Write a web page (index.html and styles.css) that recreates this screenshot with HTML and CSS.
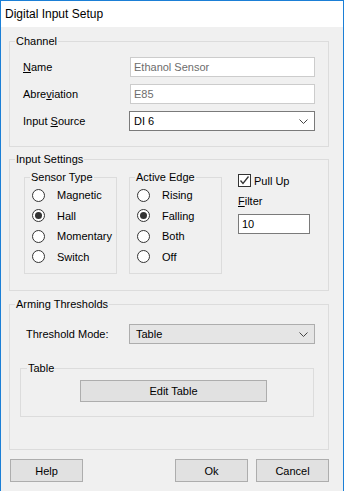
FILE: index.html
```html
<!DOCTYPE html>
<html lang="en">
<head>
    <meta charset="UTF-8">
    <meta name="viewport" content="width=device-width, initial-scale=1.0">
    <title>Digital Input Setup</title>
    <link rel="stylesheet" href="styles.css">
</head>
<body>
    <div class="window">
        <div class="titlebar">Digital Input Setup</div>
        <div class="client">

            <fieldset class="group channel">
                <legend>Channel</legend>
                <div class="form-grid">
                    <span class="label"><u>N</u>ame</span>
                    <div class="textbox disabled">Ethanol Sensor</div>
                    <span class="label">Abre<u>v</u>iation</span>
                    <div class="textbox disabled">E85</div>
                    <span class="label">Input <u>S</u>ource</span>
                    <div class="combo white">
                        <span>DI 6</span>
                        <svg class="arrow" width="9" height="5" viewBox="0 0 9 5"><path d="M0.5 0.5 L4.5 4.5 L8.5 0.5" fill="none" stroke="#444" stroke-width="1"/></svg>
                    </div>
                </div>
            </fieldset>

            <fieldset class="group settings">
                <legend>Input Settings</legend>
                <div class="settings-row">
                    <fieldset class="group subgroup">
                        <legend>Sensor Type</legend>
                        <div class="radio-list">
                            <div class="radio"><span class="dot"></span>Magnetic</div>
                            <div class="radio"><span class="dot checked"></span>Hall</div>
                            <div class="radio"><span class="dot"></span>Momentary</div>
                            <div class="radio"><span class="dot"></span>Switch</div>
                        </div>
                    </fieldset>
                    <fieldset class="group subgroup">
                        <legend>Active Edge</legend>
                        <div class="radio-list">
                            <div class="radio"><span class="dot"></span>Rising</div>
                            <div class="radio"><span class="dot checked"></span>Falling</div>
                            <div class="radio"><span class="dot"></span>Both</div>
                            <div class="radio"><span class="dot"></span>Off</div>
                        </div>
                    </fieldset>
                    <div class="side">
                        <div class="checkbox">
                            <span class="box">
                                <svg width="11" height="11" viewBox="0 0 11 11"><path d="M1.5 5.5 L4 8.5 L9.5 1.5" fill="none" stroke="#333" stroke-width="1.3"/></svg>
                            </span>
                            Pull Up
                        </div>
                        <div class="filter-label"><u>F</u>ilter</div>
                        <div class="textbox filter">10</div>
                    </div>
                </div>
            </fieldset>

            <fieldset class="group arming">
                <legend>Arming Thresholds</legend>
                <div class="arming-body">
                    <div class="mode-row">
                        <span class="label">Threshold Mode:</span>
                        <div class="combo grey">
                            <span>Table</span>
                            <svg class="arrow" width="9" height="5" viewBox="0 0 9 5"><path d="M0.5 0.5 L4.5 4.5 L8.5 0.5" fill="none" stroke="#444" stroke-width="1"/></svg>
                        </div>
                    </div>
                    <fieldset class="group table-group">
                        <legend>Table</legend>
                        <button class="btn edit-table">Edit Table</button>
                    </fieldset>
                </div>
            </fieldset>

            <div class="buttons">
                <button class="btn">Help</button>
                <div class="spacer"></div>
                <button class="btn">Ok</button>
                <button class="btn">Cancel</button>
            </div>
        </div>
    </div>
</body>
</html>
```

FILE: styles.css
```css
html, body {
    margin: 0;
    padding: 0;
}

body {
    width: 344px;
    height: 491px;
    overflow: hidden;
    font-family: "Liberation Sans", Arial, sans-serif;
    font-size: 11px;
    color: #000;
    background: #f0f0f0;
}

u {
    text-decoration: underline;
    text-underline-offset: 1px;
}

.window {
    box-sizing: border-box;
    height: 491px;
    border: 1px solid #1b7fd6;
    border-bottom: none;
    display: flex;
    flex-direction: column;
}

.titlebar {
    height: 26px;
    line-height: 26px;
    background: #fff;
    padding-left: 4px;
    font-size: 12px;
}

.client {
    flex: 1;
    background: #f0f0f0;
    padding: 7px 14px 0 8px;
}

/* group boxes: legend sits at the left edge, content padding is on the inner block */
.group {
    margin: 0;
    padding: 0;
    min-width: 0;
    border: 1px solid #dcdcdc;
}

.group > legend {
    margin-left: 5px;
    padding: 0 1px;
    line-height: 15px;
}

.form-grid {
    display: grid;
    grid-template-columns: 107px 185px;
    grid-auto-rows: 20px;
    row-gap: 7px;
    align-items: center;
    padding: 8px 13px 15px 13px;
}

.textbox {
    box-sizing: border-box;
    height: 20px;
    line-height: 18px;
    padding: 0 3px;
    background: #fff;
    border: 1px solid #7a7a7a;
}

.textbox.disabled {
    border-color: #cccccc;
    color: #6d6d6d;
}

.combo {
    box-sizing: border-box;
    height: 20px;
    width: 186px;
    margin-left: -1px;
    display: flex;
    align-items: center;
    justify-content: space-between;
    padding: 0 6px 0 4px;
}

.combo.white {
    background: #fff;
    border: 1px solid #7a7a7a;
}

.combo.grey {
    background: #e5e5e5;
    border: 1px solid #adadad;
    padding-left: 6px;
}

.arrow {
    display: block;
}

.settings {
    margin-top: 5px;
}

.settings-row {
    display: flex;
    align-items: flex-start;
    padding: 3px 13px 16px 14px;
}

.subgroup {
    width: 93px;
    box-sizing: border-box;
}

.subgroup + .subgroup {
    margin-left: 12px;
}

.radio-list {
    padding: 0 0 6px 7px;
}

.radio {
    height: 20.5px;
    display: flex;
    align-items: center;
    gap: 12px;
}

.dot {
    box-sizing: border-box;
    width: 13px;
    height: 13px;
    border: 1px solid #333;
    border-radius: 50%;
    background: #fff;
    display: flex;
    align-items: center;
    justify-content: center;
}

.dot.checked::after {
    content: "";
    width: 7px;
    height: 7px;
    border-radius: 50%;
    background: #333;
}

.side {
    margin-left: 16px;
    padding-top: 4px;
}

.checkbox {
    display: flex;
    align-items: center;
    gap: 3px;
    height: 13px;
}

.box {
    box-sizing: border-box;
    width: 13px;
    height: 13px;
    border: 1px solid #333;
    background: #fff;
    display: flex;
    align-items: center;
    justify-content: center;
}

.box svg {
    display: block;
}

.filter-label {
    margin-top: 7px;
    line-height: 15px;
}

.textbox.filter {
    width: 72px;
    margin-top: 5px;
}

.arming {
    margin-top: 6px;
}

.arming-body {
    padding: 12px 13px 32px 10px;
}

.mode-row {
    display: flex;
    align-items: center;
    padding-left: 6px;
}

.mode-row .label {
    width: 104px;
}

.table-group {
    margin-top: 17px;
    width: 294px;
    box-sizing: border-box;
}

.table-group > legend {
    margin-left: 6px;
}

.btn {
    box-sizing: border-box;
    height: 23px;
    width: 73px;
    background: #e1e1e1;
    border: 1px solid #adadad;
    font-family: inherit;
    font-size: 11px;
    color: #000;
    padding: 0;
    cursor: pointer;
}

.btn:hover {
    background: #e5f1fb;
    border-color: #0078d7;
}

.edit-table {
    width: 187px;
    height: 22px;
    display: block;
    margin: 4px 0 14px 59px;
}

.buttons {
    display: flex;
    gap: 8px;
    margin-top: 9px;
    padding-left: 1px;
}

.spacer {
    flex: 1;
}
```
